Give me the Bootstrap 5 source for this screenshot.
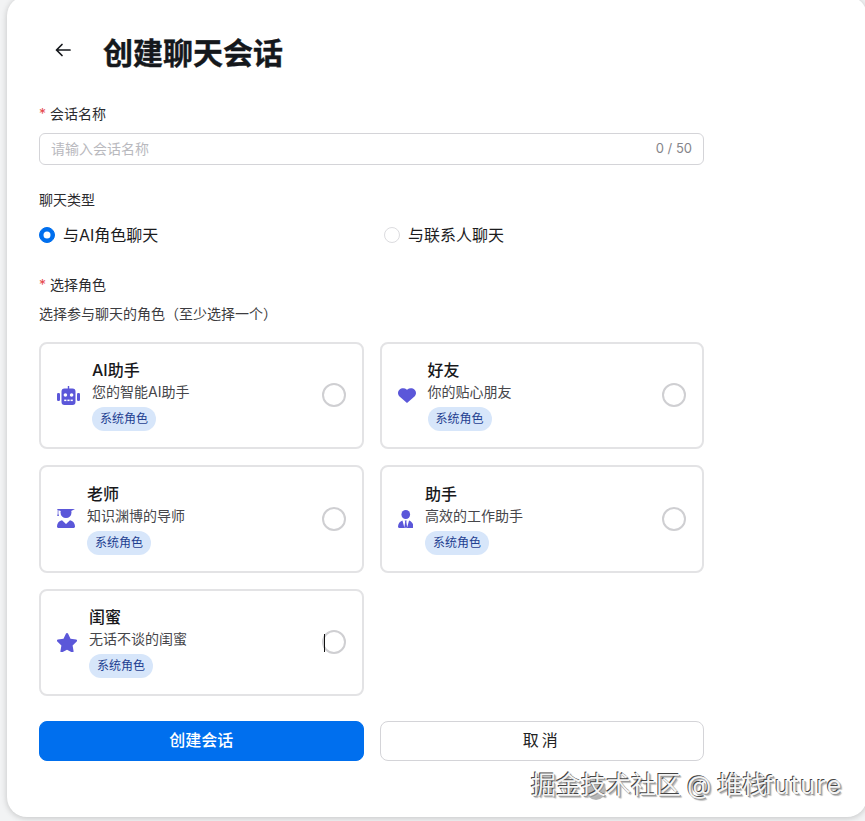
<!DOCTYPE html>
<html lang="zh-CN">
<head>
  <meta charset="UTF-8" />
  <meta name="viewport" content="width=device-width, initial-scale=1.0" />
  <title>创建聊天会话</title>
  <link rel="stylesheet" href="https://cdn.jsdelivr.net/npm/bootstrap@5.3.0/dist/css/bootstrap.min.css" />
  <style>
    html, body {
      height: 821px;
      overflow: hidden;
    }
    body {
      background: #f2f3f4;
      font-family: Inter, "Noto Sans CJK SC", sans-serif;
      color: #1c1c1e;
    }
    .panel-sheet {
      position: relative;
      width: 860px;
      height: 821px;
      margin: -4px 0 0 7px;
      padding: 4px 0 0 32px;
      background: #fff;
      border-radius: 20px;
      box-shadow: 0 1px 6px rgba(0, 0, 0, .2);
    }
    .form-wrap {
      width: 665px;
    }
    .page-head {
      height: 104px;
      padding: 2px 0 0 16px;
      gap: 32px;
    }
    .page-head svg {
      margin-bottom: 7px;
    }
    .page-head h1 {
      margin: 0;
      font-size: 30px;
      line-height: 1;
      font-weight: 700;
      color: #15181c;
      -webkit-text-stroke: .4px #15181c;
    }
    .field-label {
      display: block;
      font-size: 14px;
      line-height: 20px;
      margin-bottom: 9px;
      color: #2b2b2e;
    }
    .type-label {
      margin-bottom: 13px;
    }
    .role-label {
      margin-bottom: 10px;
    }
    .req {
      color: #e5484d;
      margin-right: 4px;
    }
    .name-box {
      margin-bottom: 25px;
    }
    .name-box .form-control {
      height: 32px;
      padding: 0 60px 2px 11px;
      font-size: 14px;
      border-color: #d4d4d8;
      border-radius: 6px;
    }
    .name-box .form-control::placeholder {
      color: #b9b9be;
    }
    .name-count {
      position: absolute;
      right: 12px;
      top: 5px;
      font-size: 13px;
      line-height: 20px;
      color: #85858a;
    }
    .type-row {
      height: 24px;
      margin-bottom: 28px;
    }
    .type-opt {
      flex: none;
      width: 345px;
      gap: 8px;
      font-size: 16px;
      line-height: 24px;
      margin: 0;
    }
    .type-opt .form-check-input {
      width: 16px;
      height: 16px;
      margin: 0;
      border-color: #dcdcdf;
    }
    .form-check-input:checked {
      background-color: #006fee;
      border-color: #006fee;
    }
    .hint-line {
      font-size: 14px;
      line-height: 20px;
      color: #3c3c40;
      margin-top: -1px;
      margin-bottom: 17.5px;
    }
    .role-box {
      position: relative;
      height: 107.5px;
      padding: 16px;
      gap: 12px;
      border: 2px solid #e3e3e5;
      border-radius: 8px;
      background: #fff;
    }
    .role-icon {
      fill: #5b57d9;
      flex: none;
    }
    .role-name {
      font-size: 16px;
      line-height: 22px;
      font-weight: 500;
      color: #18181b;
    }
    .role-desc {
      font-size: 14px;
      line-height: 20px;
      color: #46464a;
      margin-top: 1px;
      margin-bottom: 3px;
    }
    .role-chip {
      display: inline-block;
      height: 24px;
      padding: 0 8px;
      font-size: 12px;
      line-height: 24px;
      border-radius: 12px;
      background: #d7e6fa;
      color: #1f3f91;
    }
    .role-box .form-check-input {
      width: 24px;
      height: 24px;
      margin: 0;
      border: 2px solid #cfcfd2;
      flex: none;
    }
    .text-caret {
      position: absolute;
      left: 283px;
      top: 43px;
      width: 1px;
      height: 18px;
      background: #111;
    }
    .foot-row {
      margin-top: 8.5px;
    }
    .foot-btn {
      height: 40px;
      font-size: 16px;
      padding: 0 0 2px;
      border-radius: 8px;
    }
    .btn-create {
      background: #006fee;
      border-color: #006fee;
      font-weight: 500;
    }
    .btn-cancel {
      background: #fff;
      border-color: #d4d4d8;
      color: #222;
      letter-spacing: 3px;
    }
    .site-mark {
      position: absolute;
      left: 531px;
      top: 769px;
      isolation: isolate;
      font-size: 25px;
      line-height: 32px;
      white-space: nowrap;
      word-spacing: -1px;
      color: #f4f4f4;
      text-shadow: -1px -1px 0 #444, 1px 1px 0 #999, 2px 2px 1px #bbb;
    }
    .site-mark .mark-latin {
      margin-left: -3px;
      letter-spacing: 1.3px;
    }
    .mark-dot {
      position: absolute;
      left: 55px;
      top: 11px;
      width: 20px;
      height: 20px;
      border-radius: 50%;
      background: rgba(130, 130, 130, .6);
      z-index: -1;
    }
  </style>
</head>
<body>
  <div class="panel-sheet">
    <div class="form-wrap">
      <div class="page-head d-flex align-items-center">
        <svg width="16" height="14" viewBox="0 0 16 14" fill="none" stroke="#15181c" stroke-width="1.7" stroke-linecap="round" stroke-linejoin="round" aria-hidden="true">
          <path d="M15 7H1.500M7 1.500 1.500 7 7 12.500" />
        </svg>
        <h1>创建聊天会话</h1>
      </div>

      <label class="field-label" for="sessionName"><span class="req">*</span>会话名称</label>
      <div class="name-box position-relative">
        <input type="text" id="sessionName" class="form-control" placeholder="请输入会话名称" />
        <span class="name-count">0 / 50</span>
      </div>

      <div class="field-label type-label">聊天类型</div>
      <div class="type-row d-flex">
        <label class="type-opt d-flex align-items-center">
          <input class="form-check-input" type="radio" name="chatType" checked /> 与AI角色聊天
        </label>
        <label class="type-opt d-flex align-items-center">
          <input class="form-check-input" type="radio" name="chatType" /> 与联系人聊天
        </label>
      </div>

      <div class="field-label role-label"><span class="req">*</span>选择角色</div>
      <div class="hint-line">选择参与聊天的角色（至少选择一个）</div>

      <div class="row g-3">
        <div class="col-6">
          <div class="role-box d-flex align-items-center">
            <svg class="role-icon" width="23" height="19" viewBox="0 0 23 19" aria-hidden="true">
              <path d="M10.800 0h1.400v2.600h3.300a3 3 0 0 1 3 3v10.400a3 3 0 0 1-3 3h-8a3 3 0 0 1-3-3V5.600a3 3 0 0 1 3-3h3.300z" />
              <rect x="0" y="7" width="3" height="8" rx="1.200" />
              <rect x="20" y="7" width="3" height="8" rx="1.200" />
              <circle cx="8.400" cy="9" r="1.800" fill="#fff" />
              <circle cx="14.600" cy="9" r="1.800" fill="#fff" />
              <rect x="7.200" y="13.600" width="2.200" height="1.500" fill="#fff" />
              <rect x="10.400" y="13.600" width="2.200" height="1.500" fill="#fff" />
              <rect x="13.600" y="13.600" width="2.200" height="1.500" fill="#fff" />
            </svg>
            <div class="flex-grow-1">
              <div class="role-name">AI助手</div>
              <div class="role-desc">您的智能AI助手</div>
              <span class="role-chip">系统角色</span>
            </div>
            <input class="form-check-input" type="radio" />
          </div>
        </div>
        <div class="col-6">
          <div class="role-box d-flex align-items-center">
            <svg class="role-icon" width="18" height="15" viewBox="0 0 19 17" preserveAspectRatio="none" aria-hidden="true">
              <path d="M9.500 17 1.600 9.600C-.5 7.600-.5 4 1.500 1.900 3.600-.2 7-.3 9.100 1.600l.4.400.4-.4C12-.3 15.400-.2 17.500 1.900c2 2.100 2 5.700-.1 7.700z" />
            </svg>
            <div class="flex-grow-1">
              <div class="role-name">好友</div>
              <div class="role-desc">你的贴心朋友</div>
              <span class="role-chip">系统角色</span>
            </div>
            <input class="form-check-input" type="radio" />
          </div>
        </div>
        <div class="col-6">
          <div class="role-box d-flex align-items-center">
            <svg class="role-icon" width="18" height="19" viewBox="0 0 18 19" aria-hidden="true">
              <path d="M0 0h18l-3.800 1.900c.2.500.3 1 .3 1.600a5.500 5.500 0 0 1-11 0c0-.6.100-1.100.3-1.600L1.400 1.300v3.500l.6 2.200H.2l.5-2.200V1z" />
              <path d="M5 11.300 9 15l4-3.700c2.900.6 5 3 5 6v.2c0 .8-.7 1.500-1.500 1.500h-15C.7 19 0 18.300 0 17.500v-.2c0-3 2.100-5.400 5-6z" />
            </svg>
            <div class="flex-grow-1">
              <div class="role-name">老师</div>
              <div class="role-desc">知识渊博的导师</div>
              <span class="role-chip">系统角色</span>
            </div>
            <input class="form-check-input" type="radio" />
          </div>
        </div>
        <div class="col-6">
          <div class="role-box d-flex align-items-center">
            <svg class="role-icon" width="15.500" height="18" viewBox="0 0 16 18" preserveAspectRatio="none" aria-hidden="true">
              <circle cx="8" cy="4.500" r="4.500" />
              <path d="M4.600 10.500 6.700 18H1.200C.5 18 0 17.500 0 16.800c0-3 1.900-5.500 4.600-6.300zM11.400 10.500C14.100 11.300 16 13.800 16 16.800c0 .7-.5 1.200-1.200 1.200H9.300zM7 10.400h2l-.4 1.400.9 6h-3l.9-6z" />
            </svg>
            <div class="flex-grow-1">
              <div class="role-name">助手</div>
              <div class="role-desc">高效的工作助手</div>
              <span class="role-chip">系统角色</span>
            </div>
            <input class="form-check-input" type="radio" />
          </div>
        </div>
        <div class="col-6">
          <div class="role-box d-flex align-items-center">
            <svg class="role-icon" width="20" height="19" viewBox="0 0 20 19" aria-hidden="true">
              <path d="M10 0a1.100 1.100 0 0 1 1 .6l2.500 5.200 5.600.8c.9.100 1.300 1.300.6 1.900l-4.100 4 1 5.700c.1.900-.8 1.600-1.600 1.200L10 16.700l-5 2.700c-.8.400-1.700-.3-1.600-1.200l1-5.700-4.100-4C-.4 7.900 0 6.700.9 6.600l5.600-.8L9 .6A1.100 1.100 0 0 1 10 0z" />
            </svg>
            <div class="flex-grow-1">
              <div class="role-name">闺蜜</div>
              <div class="role-desc">无话不谈的闺蜜</div>
              <span class="role-chip">系统角色</span>
            </div>
            <input class="form-check-input" type="radio" />
            <span class="text-caret"></span>
          </div>
        </div>
      </div>

      <div class="row g-3 foot-row">
        <div class="col-6">
          <button type="button" class="btn btn-primary btn-create foot-btn w-100">创建会话</button>
        </div>
        <div class="col-6">
          <button type="button" class="btn btn-cancel foot-btn w-100">取消</button>
        </div>
      </div>
    </div>
  </div>
  <div class="site-mark"><span class="mark-dot"></span>掘金技术社区 @ 堆栈<span class="mark-latin">future</span></div>
</body>
</html>
